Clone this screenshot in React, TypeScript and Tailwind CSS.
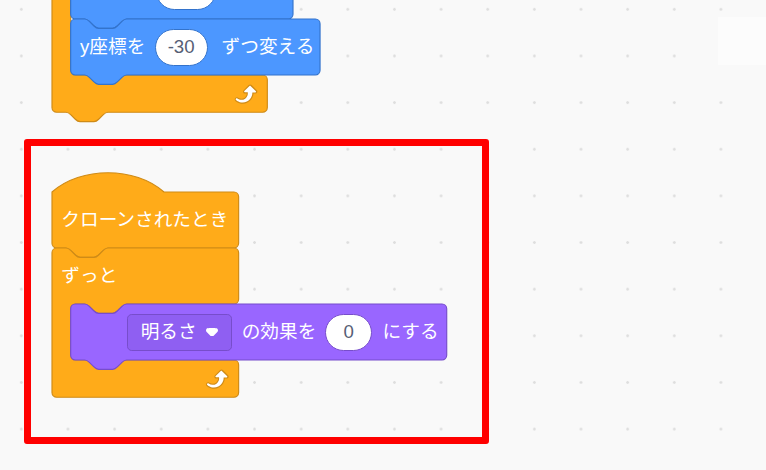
import React from "react";

const S = 1.1664;
const NL = "c 2,0 3,1 4,2 l 4,4 c 1,1 2,2 4,2 h 12 c 2,0 3,-1 4,-2 l 4,-4 c 1,-1 2,-2 4,-2";
const NR = "c -2,0 -3,1 -4,2 l -4,4 c -1,1 -2,2 -4,2 h -12 c -2,0 -3,-1 -4,-2 l -4,-4 c -1,-1 -2,-2 -4,-2";

function stackPath(w: number, h: number) {
  return `M 0,4 A 4,4 0 0,1 4,0 H 12 ${NL} H ${w - 4} A 4,4 0 0,1 ${w},4 V ${h - 4} A 4,4 0 0,1 ${w - 4},${h} H 48 ${NR} H 4 A 4,4 0 0,1 0,${h - 4} Z`;
}
function hatPath(w: number, h: number) {
  return `M 0,0 c 25,-22 71,-22 96,0 H ${w - 4} A 4,4 0 0,1 ${w},4 V ${h - 4} A 4,4 0 0,1 ${w - 4},${h} H 48 ${NR} H 4 A 4,4 0 0,1 0,${h - 4} Z`;
}
function cPath(w: number, a: number, ih: number, b: number, cap: boolean) {
  const y2 = a + ih;
  const t = a + ih + b;
  const bottom = cap ? `H 4` : `H 48 ${NR} H 4`;
  return `M 0,4 A 4,4 0 0,1 4,0 H 12 ${NL} H ${w - 4} A 4,4 0 0,1 ${w},4 V ${a - 4} A 4,4 0 0,1 ${w - 4},${a} H 64 ${NR} H 20 A 4,4 0 0,0 16,${a + 4} V ${y2 - 4} A 4,4 0 0,0 20,${y2} H ${w - 4} A 4,4 0 0,1 ${w},${y2 + 4} V ${t - 4} A 4,4 0 0,1 ${w - 4},${t} ${bottom} A 4,4 0 0,1 0,${t - 4} Z`;
}

const ORANGE = { fill: "#FFAB19", stroke: "#CF8B17" };
const BLUE = { fill: "#4C97FF", stroke: "#3373CC" };
const PURPLE = { fill: "#9966FF", stroke: "#774DCB" };

function RepeatIcon({ x, y }: { x: number; y: number }) {
  return (
    <g transform={`translate(${x},${y})`}>
      <path
        d="M23.3 11c-.3.6-.9 1-1.5 1h-1.6c-.1 1.3-.5 2.5-1.1 3.6-.9 1.7-2.3 3.2-4.1 4.1-1.7.9-3.6 1.2-5.5.9-1.8-.3-3.5-1.1-4.9-2.3-.7-.7-.7-1.9 0-2.6.6-.6 1.6-.7 2.3-.2H7c.9.6 1.9.9 2.9.9s1.9-.3 2.7-.9c1.1-.8 1.8-2.1 1.8-3.5h-1.5c-.9 0-1.7-.7-1.7-1.7 0-.4.2-.9.5-1.2l4.4-4.4c.7-.6 1.7-.6 2.4 0L23 9.2c.5.5.6 1.2.3 1.8z"
        fill="#CF8B17"
      />
      <path
        d="M21.8 11h-2.6c0 1.5-.3 2.9-1 4.2-.8 1.6-2.1 2.8-3.7 3.6-1.5.8-3.3 1.1-4.9.8-1.6-.2-3.2-1-4.4-2.1-.4-.3-.4-.9-.1-1.2.3-.4.9-.4 1.2-.1 1 .7 2.2 1.1 3.4 1.1s2.3-.3 3.3-1c.9-.6 1.6-1.5 2-2.6.3-.9.4-1.8.2-2.8h-2.4c-.4 0-.7-.3-.7-.7 0-.2.1-.3.2-.4l4.4-4.4c.3-.3.7-.3.9 0L22 9.8c.3.3.4.6.3.9s-.3.3-.5.3z"
        fill="#FFFFFF"
      />
    </g>
  );
}

function Block({ d, c, x = 0, y = 0 }: { d: string; c: { fill: string; stroke: string }; x?: number; y?: number }) {
  return <path d={d} fill={c.fill} stroke={c.stroke} strokeWidth={1} transform={`translate(${x},${y})`} />;
}

function DropArrow() {
  return (
    <svg width="12" height="8.3" viewBox="0 0 12.71 8.79" className="shrink-0">
      <path
        d="M12.71,2.44A2.41,2.41,0,0,1,12,4.16L8.08,8.08a2.45,2.45,0,0,1-3.45,0L0.72,4.16A2.42,2.42,0,0,1,0,2.44,2.48,2.48,0,0,1,.71.71C1,0.47,1.43,0,6.36,0S11.75,0.46,12,.71A2.44,2.44,0,0,1,12.71,2.44Z"
        fill="#FFFFFF"
      />
    </svg>
  );
}

const txt = "text-[18.66px] leading-none text-white whitespace-nowrap";

export default function App() {
  return (
    <div className="relative w-[766px] h-[470px] overflow-hidden bg-[#f9f9f9] bg-[radial-gradient(circle,#dedede_1px,transparent_1.6px)] bg-[length:46.656px_46.656px] bg-[position:-2px_-14px] font-['Liberation_Sans','Noto_Sans_CJK_JP',sans-serif]">
      {/* zoom control ghost */}
      <div className="absolute left-[718px] top-[17px] w-[48px] h-[48px] bg-[#fcfcfc]" />

      {/* top script */}
      <div className="absolute left-[52px] top-[-92.7px] w-[300px]">
        <svg className="absolute left-0 top-0 overflow-visible" width="300" height="210">
          <g transform={`scale(${S})`}>
            <Block d={cPath(184.6, 48, 96, 32, false)} c={ORANGE} />
            <RepeatIcon x={152.6} y={148} />
            <Block d={stackPath(190.6, 48)} c={BLUE} x={16} y={48} />
            <Block d={stackPath(213.8, 48)} c={BLUE} x={16} y={96} />
          </g>
        </svg>
        <div className="relative flex flex-col">
          <div className="h-[56px]" />
          <div className="h-[56px] ml-[18.66px] flex items-center">
            <div className="ml-[85.6px] w-[60px] h-[37.3px] rounded-full bg-white border border-[#3373CC]" />
          </div>
          <div className="h-[56px] ml-[18.66px] flex items-center pl-[9.33px]">
            <span className={txt}>y座標を</span>
            <div className="ml-[9.33px] h-[37.3px] w-[53px] rounded-full bg-white border border-[#3373CC] flex items-center justify-center">
              <span className="text-[18.66px] leading-none text-[#575E75]">-30</span>
            </div>
            <span className={`${txt} ml-[14px]`}>ずつ変える</span>
          </div>
        </div>
      </div>

      {/* bottom script */}
      <div className="absolute left-[52px] top-[192.3px] w-[400px]">
        <svg className="absolute left-0 top-0 overflow-visible" width="400" height="206">
          <g transform={`scale(${S})`}>
            <Block d={hatPath(160, 48)} c={ORANGE} />
            <Block d={cPath(160, 48, 48, 32, true)} c={ORANGE} y={48} />
            <RepeatIcon x={128} y={148} />
            <Block d={stackPath(322.4, 48)} c={PURPLE} x={16} y={96} />
          </g>
        </svg>
        <div className="relative flex flex-col">
          <div className="h-[56px] flex items-center pl-[9.33px]">
            <span className={txt}>クローンされたとき</span>
          </div>
          <div className="h-[56px] flex items-center pl-[9.33px]">
            <span className={txt}>ずっと</span>
          </div>
          <div className="h-[56px] ml-[18.66px] flex items-center pl-[56px]">
            <div className="w-[105px] h-[37.3px] rounded-[4.67px] bg-[#8f5ff2] border border-[#774DCB] flex items-center pl-[13px] gap-[9px]">
              <span className={txt}>明るさ</span>
              <DropArrow />
            </div>
            <span className={`${txt} ml-[10px]`}>の効果を</span>
            <div className="ml-[9px] h-[37.3px] w-[46.7px] rounded-full bg-white border border-[#774DCB] flex items-center justify-center">
              <span className="text-[18.66px] leading-none text-[#575E75]">0</span>
            </div>
            <span className={`${txt} ml-[10.5px]`}>にする</span>
          </div>
          <div className="h-[37.3px]" />
        </div>
      </div>

      {/* red annotation box */}
      <div className="absolute left-[24px] top-[139px] w-[465px] h-[305px] border-[7px] border-[#ff0000] rounded-[3px]" />
    </div>
  );
}
